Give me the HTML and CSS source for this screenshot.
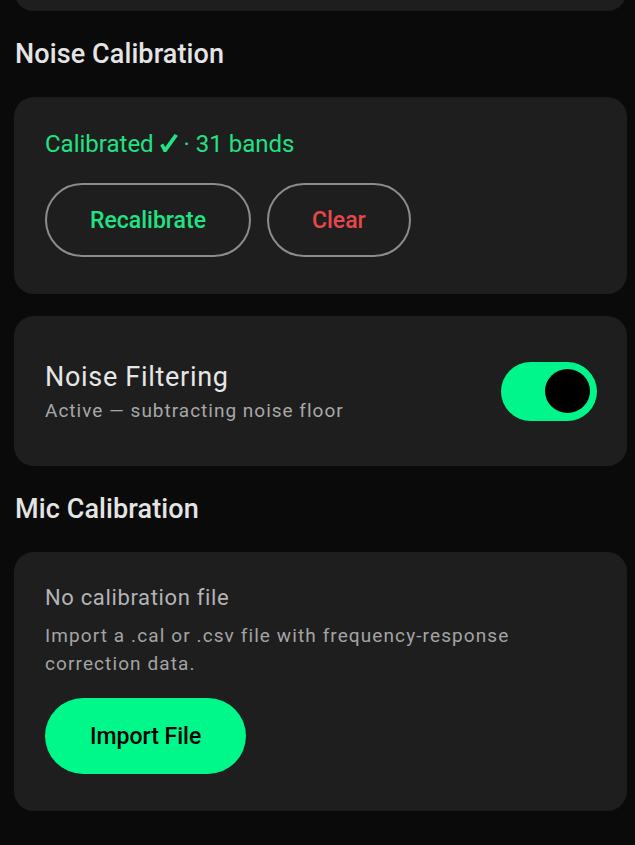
FILE: index.html
```html
<!DOCTYPE html>
<html lang="en">
<head>
<meta charset="utf-8">
<title>Calibration</title>
<link rel="stylesheet" href="styles.css">
</head>
<body>
<main class="page">
  <div class="card card-fragment"></div>

  <h2 class="section-title">Noise Calibration</h2>
  <section class="card card-noise">
    <p class="status">Calibrated <svg class="check" viewBox="0 0 18 18" width="18" height="18" aria-hidden="true"><path d="M0.2 11.3 L3.2 9.6 L5.2 13.1 L14.6 0.1 L17.9 1.7 L6.3 17.9 L3.7 17.9 Z" fill="currentColor"/></svg> · 31 bands</p>
    <div class="btn-row">
      <button class="btn-outline btn-green">Recalibrate</button>
      <button class="btn-outline btn-red">Clear</button>
    </div>
  </section>

  <section class="card card-filter">
    <div class="filter-text">
      <div class="filter-title">Noise Filtering</div>
      <div class="filter-sub">Active — subtracting noise floor</div>
    </div>
    <div class="toggle"><span class="toggle-thumb"></span></div>
  </section>

  <h2 class="section-title">Mic Calibration</h2>
  <section class="card card-mic">
    <div class="mic-title">No calibration file</div>
    <p class="mic-desc">Import a .cal or .csv file with frequency-response correction data.</p>
    <button class="btn-filled">Import File</button>
  </section>
</main>
</body>
</html>
```
FILE: styles.css
```css
* { box-sizing: border-box; }
html, body {
  margin: 0;
  background: #0a0a0a;
  font-family: Roboto, "Noto Sans", "Liberation Sans", sans-serif;
  color: #e6e6e6;
}
.page {
  padding: 0 8px 0 14px;
  overflow: hidden;
  height: 845px;
}
.card {
  background: #1e1e1e;
  border-radius: 20px;
}
.card-fragment {
  height: 41px;
  margin-top: -30px;
}
.section-title {
  margin: 27px 0 27px 1px;
  font-size: 27px;
  line-height: 32px;
  font-weight: 500;
  letter-spacing: 0.1px;
  color: #e4e4e4;
}
.card-noise {
  padding: 31px 31px 37px;
}
.status {
  margin: 0;
  font-size: 24px;
  line-height: 32px;
  color: #22e283;
}
.check {
  display: inline-block;
  vertical-align: 0;
}
.btn-row {
  display: flex;
  gap: 16px;
  margin-top: 23px;
}
.btn-outline {
  height: 74px;
  padding: 0 43px;
  border: 2px solid #8c8c8c;
  border-radius: 37px;
  background: transparent;
  font-family: inherit;
  font-size: 23px;
  font-weight: 500;
}
.btn-green { color: #22e283; }
.btn-red { color: #e5484a; }
.card-filter {
  margin-top: 22px;
  height: 150px;
  padding: 0 30px 0 31px;
  display: flex;
  align-items: center;
  justify-content: space-between;
}
.filter-title {
  font-size: 27px;
  line-height: 34px;
  letter-spacing: 0.7px;
  color: #e6e6e6;
}
.filter-sub {
  margin-top: 5px;
  font-size: 19px;
  line-height: 24px;
  letter-spacing: 1px;
  color: #a8a8a8;
}
.toggle {
  width: 96px;
  height: 59px;
  border-radius: 30px;
  background: #00f58a;
  display: flex;
  align-items: center;
  justify-content: flex-end;
  padding-right: 7px;
}
.toggle-thumb {
  width: 45px;
  height: 44px;
  border-radius: 50%;
  background: #000;
}
.card-mic {
  padding: 31px 31px 37px;
}
.mic-title {
  font-size: 22px;
  line-height: 30px;
  letter-spacing: 0.65px;
  color: #b4b4b4;
}
.mic-desc {
  margin: 9px 0 0;
  font-size: 19px;
  line-height: 28px;
  letter-spacing: 1.1px;
  color: #a4a4a4;
  max-width: 480px;
}
.btn-filled {
  margin-top: 20px;
  height: 76px;
  padding: 0 45px;
  border: none;
  border-radius: 38px;
  background: #00f78a;
  color: #000;
  font-family: inherit;
  font-size: 23px;
  font-weight: 500;
}
```
